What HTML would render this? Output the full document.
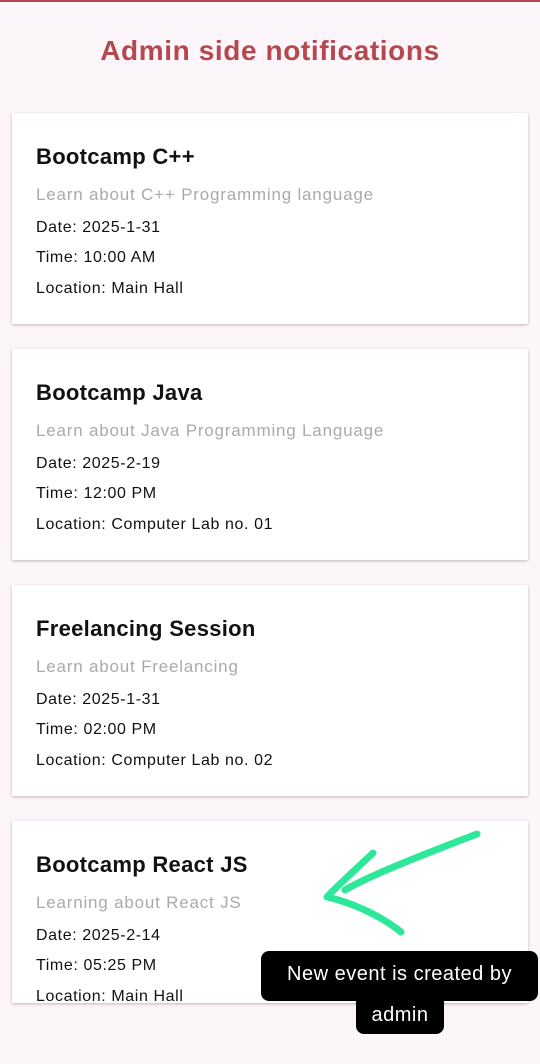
<!DOCTYPE html>
<html><head><style>
body{margin:0;width:540px;height:1064px;background:#fcf5fa;font-family:"Liberation Sans",sans-serif;position:relative;overflow:hidden}
.top{position:absolute;left:0;top:0;width:540px;height:2px;background:#b5474f}
h1{position:absolute;top:35px;left:0;width:540px;text-align:center;margin:0;font-size:28px;font-weight:bold;color:#b5474f;letter-spacing:0.6px}
.card{position:absolute;left:12px;width:516px;background:#fff;box-shadow:0 1px 3px rgba(0,0,0,.25)}
.card .t{position:absolute;left:24px;top:31px;font-size:22px;font-weight:bold;color:#111;letter-spacing:0.3px}
.card .s{position:absolute;left:24px;top:72px;font-size:17px;color:#aaa;letter-spacing:0.8px}
.card .l{position:absolute;left:24px;font-size:16px;color:#111;letter-spacing:0.6px}
.lab{position:absolute;background:#000;color:#fff;font-size:20px;border-radius:8px;text-align:center;letter-spacing:0.5px}
</style></head><body>
<div class="top"></div>
<h1>Admin side notifications</h1>

<div class="card" style="top:113px;height:211px">
<div class="t">Bootcamp C++</div><div class="s">Learn about C++ Programming language</div>
<div class="l" style="top:106px">Date: 2025-1-31</div><div class="l" style="top:136px">Time: 10:00 AM</div><div class="l" style="top:167px">Location: Main Hall</div></div>

<div class="card" style="top:349px;height:211px">
<div class="t">Bootcamp Java</div><div class="s">Learn about Java Programming Language</div>
<div class="l" style="top:106px">Date: 2025-2-19</div><div class="l" style="top:136px">Time: 12:00 PM</div><div class="l" style="top:167px">Location: Computer Lab no. 01</div></div>

<div class="card" style="top:585px;height:211px">
<div class="t">Freelancing Session</div><div class="s">Learn about Freelancing</div>
<div class="l" style="top:106px">Date: 2025-1-31</div><div class="l" style="top:136px">Time: 02:00 PM</div><div class="l" style="top:167px">Location: Computer Lab no. 02</div></div>

<div class="card" style="top:821px;height:182px">
<div class="t">Bootcamp React JS</div><div class="s">Learning about React JS</div>
<div class="l" style="top:106px">Date: 2025-2-14</div><div class="l" style="top:136px">Time: 05:25 PM</div><div class="l" style="top:167px">Location: Main Hall</div></div>

<svg style="position:absolute;left:0;top:0" width="540" height="1064">
<path d="M477 834 C430 852 370 875 345 890 M373 853 C355 870 338 885 327 897 C350 902 380 915 401 932" fill="none" stroke="#2ee89a" stroke-width="7" stroke-linecap="round" stroke-linejoin="round"/>
</svg>
<div class="lab" style="left:356px;top:990px;width:88px;height:44px;line-height:50px">admin</div>
<div class="lab" style="left:261px;top:951px;width:277px;height:50px;line-height:46px">New event is created by</div>
</body></html>
